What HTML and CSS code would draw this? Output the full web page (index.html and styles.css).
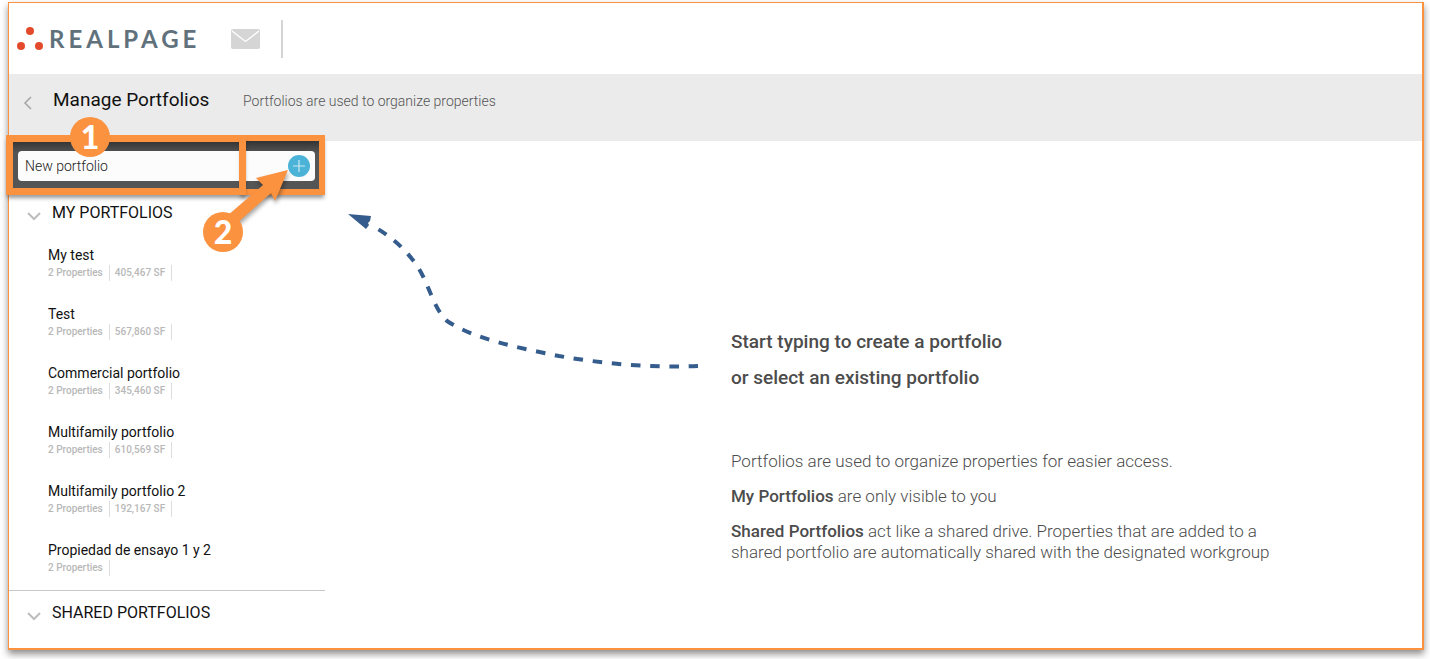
FILE: index.html
```
<!DOCTYPE html>
<html lang="en">
<head>
<meta charset="utf-8">
<title>Manage Portfolios</title>
<link rel="stylesheet" href="styles.css">
</head>
<body>
<div class="frame">
  <header class="topbar">
    <div class="brand">
      <svg class="brand-mark" width="28" height="24" viewBox="0 0 28 24" aria-hidden="true">
        <circle cx="13" cy="4" r="4"/><circle cx="4" cy="19" r="4"/><circle cx="22" cy="19" r="4"/>
      </svg>
      <span class="brand-name">REALPAGE</span>
    </div>
    <button class="icon-button mail" type="button" aria-label="Messages">
      <svg width="29" height="20" viewBox="0 0 29 20" aria-hidden="true">
        <rect width="29" height="20" rx="2" fill="#d5d5d5"/>
        <path d="M1 2 14.500 12.500 28 2" fill="none" stroke="#fff" stroke-width="1.300"/>
      </svg>
    </button>
  </header>

  <div class="pagebar">
    <button class="icon-button back" type="button" aria-label="Back">
      <svg width="9" height="14" viewBox="0 0 9 14" aria-hidden="true"><path d="M8 1 2 7l6 6" fill="none" stroke="#a3a3a3" stroke-width="1.500"/></svg>
    </button>
    <h1 class="page-title">Manage Portfolios</h1>
    <p class="page-note">Portfolios are used to organize properties</p>
  </div>

  <div class="content">
    <aside class="sidebar">
      <form class="create">
        <div class="create-box">
          <input class="create-input" type="text" value="New portfolio" aria-label="Portfolio name">
          <button class="icon-button add" type="button" aria-label="Add portfolio">
            <svg width="22" height="22" viewBox="0 0 22 22" aria-hidden="true"><circle cx="11" cy="11" r="11" fill="#4cb3d8"/><path d="M11 5v12M5 11h12" stroke="#c9e9f4" stroke-width="1.200"/></svg>
          </button>
        </div>
        <div class="callout callout-add"></div>
        <div class="callout callout-name"></div>
        <svg class="callout-arrow" width="90" height="90" viewBox="0 0 90 90" aria-hidden="true">
          <path d="M84 6 52 14 59 21 23 52 31 61 67 29 71 37Z" fill="#fb923f"/>
        </svg>
        <span class="badge badge-one">1</span>
        <span class="badge badge-two">2</span>
      </form>

      <section class="group group-own">
        <h2 class="group-title"><svg class="chevron" width="14" height="9" viewBox="0 0 14 9" aria-hidden="true"><path d="m1 1 6 6 6-6"/></svg>MY PORTFOLIOS</h2>
        <ul class="portfolios">
          <li class="portfolio"><a class="name" href="#">My test</a><p class="meta"><span>2 Properties</span><span>405,467 SF</span></p></li>
          <li class="portfolio"><a class="name" href="#">Test</a><p class="meta"><span>2 Properties</span><span>567,860 SF</span></p></li>
          <li class="portfolio"><a class="name" href="#">Commercial portfolio</a><p class="meta"><span>2 Properties</span><span>345,460 SF</span></p></li>
          <li class="portfolio"><a class="name" href="#">Multifamily portfolio</a><p class="meta"><span>2 Properties</span><span>610,569 SF</span></p></li>
          <li class="portfolio"><a class="name" href="#">Multifamily portfolio 2</a><p class="meta"><span>2 Properties</span><span>192,167 SF</span></p></li>
          <li class="portfolio"><a class="name" href="#">Propiedad de ensayo 1 y 2</a><p class="meta"><span>2 Properties</span></p></li>
        </ul>
      </section>
      <section class="group group-shared">
        <h2 class="group-title"><svg class="chevron" width="14" height="9" viewBox="0 0 14 9" aria-hidden="true"><path d="m1 1 6 6 6-6"/></svg>SHARED PORTFOLIOS</h2>
      </section>
    </aside>

    <main class="empty">
      <svg class="pointer" width="352" height="160" viewBox="0 0 352 160" aria-hidden="true">
        <path d="M-1 0 22 2 21 7 19 9 20 11 17 15Z" fill="#345c8c"/>
        <path d="M349 152C305 154 255 150 210 142C170 134 125 125 98 107C82 92 80 65 63 45C53 32 40 21 22 11" fill="none" stroke="#345c8c" stroke-width="4" stroke-dasharray="9.500 9.700"/>
      </svg>
      <div class="intro">
        <h2 class="lead">Start typing to create a portfolio<br>or select an existing portfolio</h2>
        <p class="text">Portfolios are used to organize properties for easier access.</p>
        <p class="text"><strong>My Portfolios</strong> are only visible to you</p>
        <p class="text"><strong>Shared Portfolios</strong> act like a shared drive. Properties that are added to a shared portfolio are automatically shared with the designated workgroup</p>
      </div>
    </main>
  </div>
</div>
</body>
</html>
```
FILE: styles.css
```
* { box-sizing: border-box; }

body {
  margin: 0;
  padding: 2px 6px 9px 8px;
  background: #fff;
  color: #111;
  font-family: Roboto, "Liberation Sans", sans-serif;
}

h1, h2, p, ul { margin: 0; padding: 0; font-weight: 400; }
ul { list-style: none; }

.frame {
  min-height: calc(100vh - 11px);
  border: 1px solid #fb923f;
  border-right-width: 2px;
  border-bottom-width: 2px;
  box-shadow: 0 4px 7px rgba(0, 0, 0, 0.45);
}

.icon-button {
  display: flex;
  padding: 0;
  border: 0;
  background: none;
  cursor: pointer;
}

.topbar {
  display: flex;
  align-items: center;
  height: 71px;
  padding-left: 8px;
}

.brand { display: flex; align-items: center; gap: 4px; width: 214px; }
.brand-mark { fill: #e34a2b; }
.brand-name {
  color: #61717c;
  font: 700 24px/28px Lato, sans-serif;
  letter-spacing: 4px;
}
.mail {
  align-items: center;
  height: 38px;
  padding-right: 21px;
  border-right: 2px solid #d5d5d5;
}

.pagebar {
  display: flex;
  align-items: center;
  height: 67px;
  padding: 0 14px 14px;
  background: #ebebeb;
}
.back { width: 30px; padding-top: 4px; }
.page-title { width: 190px; padding-bottom: 2px; font-size: 19px; line-height: 24px; }
.page-note { color: #555; font-size: 14px; font-weight: 300; line-height: 20px; }

.content { display: flex; }
.sidebar { flex: none; width: 316px; }

.create {
  position: relative;
  height: 48px;
  padding: 10px 10px 8px 9px;
  background: linear-gradient(#333, #555 12px);
}
.create-box {
  display: flex;
  align-items: center;
  height: 30px;
  padding-right: 5px;
  border-radius: 4px;
  background: #fcfcfc;
}
.create-input {
  flex: 1;
  min-width: 0;
  padding: 0 7px;
  border: 0;
  outline: 0;
  background: none;
  color: #222;
  font: 300 14px/20px Roboto, sans-serif;
}
.callout {
  position: absolute;
  top: -6px;
  height: 60px;
  border: 7px solid #fb923f;
  box-shadow: 0 4px 4px -1px rgba(0, 0, 0, 0.4);
  pointer-events: none;
}
.callout-name { left: -3px; width: 240px; }
.callout-add { left: 231px; width: 85px; border-width: 6px; }
.callout-arrow {
  position: absolute;
  top: 23px;
  left: 195px;
  filter: drop-shadow(1px 3px 2px rgba(0, 0, 0, 0.35));
  pointer-events: none;
}
.badge {
  position: absolute;
  width: 40px;
  height: 40px;
  border-radius: 50%;
  background: #fb923f;
  color: #fff;
  font: 900 32px/40px Lato, sans-serif;
  text-align: center;
}
.badge-one { top: -24px; left: 61px; }
.badge-two { top: 71px; left: 194px; }

.group-title {
  display: flex;
  align-items: center;
  gap: 11px;
  padding-left: 18px;
  font-size: 16px;
  line-height: 20px;
}
.group-own { padding-top: 14px; }
.chevron { margin-top: 7px; fill: none; stroke: #bdbdbd; stroke-width: 2; }

.portfolios { padding: 22px 0 15px 39px; }
.portfolio { height: 59px; }
.portfolio:last-child { height: 35px; }
.name { display: block; color: #111; font-size: 14px; line-height: 20px; text-decoration: none; }
.meta { display: flex; gap: 5px; color: #b8b8b8; font-size: 10px; font-weight: 500; line-height: 16px; }
.meta span { padding-right: 6px; border-right: 1px solid #ddd; }

.group-shared { padding: 12px 0; border-top: 1px solid #c8c8c8; }

.empty {
  display: flex;
  flex: 1;
  align-items: flex-start;
  gap: 30px;
  padding: 73px 24px 0;
}
.pointer { flex: none; overflow: visible; }
.intro {
  max-width: 560px;
  padding-top: 110px;
  color: #4c4c4c;
}
.lead { margin-bottom: 55px; font-size: 19px; font-weight: 500; line-height: 36px; }
.text { margin-bottom: 14px; font-size: 17px; font-weight: 300; line-height: 21px; }
.text strong { font-weight: 500; }
```
